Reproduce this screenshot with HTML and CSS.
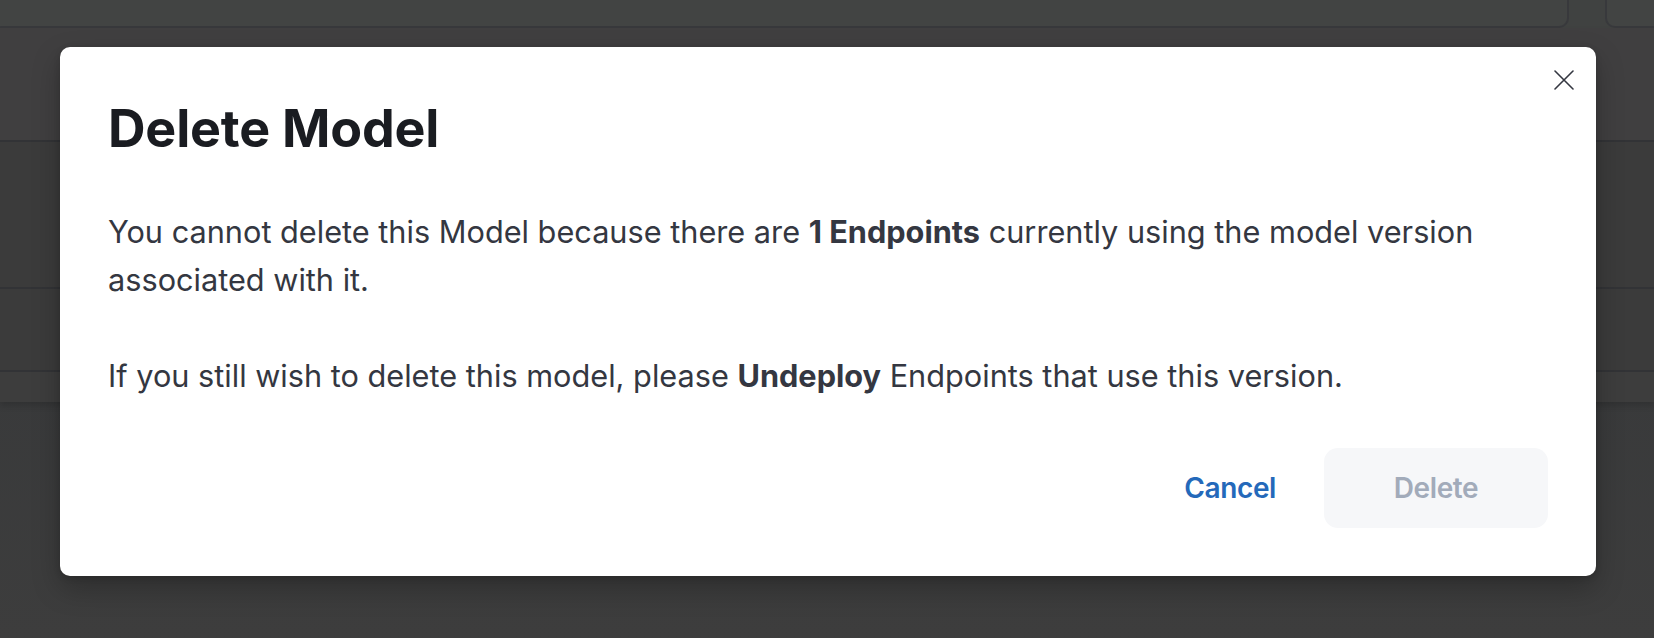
FILE: index.html
```html
<!DOCTYPE html>
<html lang="en">
<head>
<meta charset="utf-8">
<title>Delete Model</title>
<link rel="stylesheet" href="styles.css">
</head>
<body>
<div class="page">
  <div class="topbar">
    <div class="card card-a"></div>
    <div class="card card-b"></div>
  </div>
  <div class="panel">
    <div class="panel-head"></div>
    <div class="row row-tall"></div>
    <div class="row row-mid"></div>
    <div class="row row-short"></div>
  </div>
</div>

<div class="modal" role="dialog" aria-labelledby="modal-title">
  <button class="close" aria-label="Close">
    <svg width="20" height="20" viewBox="0 0 20 20" aria-hidden="true">
      <path d="M1 1 L19 19 M19 1 L1 19" stroke="#343741" stroke-width="1.6" stroke-linecap="round" fill="none"/>
    </svg>
  </button>
  <h1 id="modal-title" class="title">Delete Model</h1>
  <p class="text">You cannot delete this Model because there are <strong>1 Endpoints</strong> currently using the model version associated with it.</p>
  <p class="text">If you still wish to delete this model, please <strong>Undeploy</strong> Endpoints that use this version.</p>
  <div class="actions">
    <button class="btn btn-cancel">Cancel</button>
    <button class="btn btn-delete" disabled>Delete</button>
  </div>
</div>
</body>
</html>
```
FILE: styles.css
```css
html, body {
  margin: 0;
  padding: 0;
}

body {
  width: 1654px;
  height: 638px;
  overflow: hidden;
  position: relative;
  background: linear-gradient(180deg, #343535 0%, #393a3b 60%, #3d3d3d 100%);
  font-family: Inter, "Noto Sans", sans-serif;
}

.page {
  display: flex;
  flex-direction: column;
}

.topbar {
  display: flex;
  gap: 36px;
  margin: 0 -20px;
  height: 28px;
  background: #404241;
}

.card {
  background: #424443;
  border: 2px solid #38393c;
  border-top: none;
  border-radius: 0 0 10px 10px;
}

.card-a {
  flex: 0 0 1589px;
  box-sizing: border-box;
}

.card-b {
  flex: 1;
}

.panel {
  display: flex;
  flex-direction: column;
  background: #3d3e3e;
  box-shadow: 0 4px 6px rgba(0, 0, 0, 0.15);
}

.panel-head {
  height: 112px;
  background: #403f40;
}

.row {
  border-top: 2px solid #323336;
  background: #3b3b3b;
}

.row-tall {
  height: 145px;
}

.row-mid {
  height: 81px;
}

.row-short {
  height: 30px;
  background: #3d3d3d;
}

.modal {
  position: absolute;
  left: 60px;
  top: 47px;
  width: 1536px;
  height: 529px;
  box-sizing: border-box;
  padding: 51px 48px 48px 48px;
  background: #ffffff;
  border-radius: 10px;
  box-shadow: 0 12px 28px rgba(0, 0, 0, 0.25), 0 2px 6px rgba(0, 0, 0, 0.15);
  display: flex;
  flex-direction: column;
}

.close {
  position: absolute;
  top: 23px;
  right: 22px;
  width: 20px;
  height: 20px;
  padding: 0;
  border: none;
  background: transparent;
  display: flex;
}

.title {
  margin: 0 0 48px 0;
  font-size: 52px;
  line-height: 62px;
  font-weight: 700;
  color: #1a1c21;
  letter-spacing: -0.2px;
}

.text {
  margin: 0 0 48px 0;
  font-size: 30.7px;
  line-height: 48px;
  color: #343741;
}

.text strong {
  font-weight: 700;
}

.actions {
  display: flex;
  justify-content: flex-end;
}

.btn {
  height: 80px;
  border: none;
  font-family: Inter, "Noto Sans", sans-serif;
  font-size: 28px;
  font-weight: 600;
  letter-spacing: -0.4px;
  border-radius: 14px;
  background: transparent;
}

.btn-cancel {
  padding: 0 48px;
  color: #2469ba;
}

.btn-delete {
  width: 224px;
  padding: 0;
  background: #f6f7f9;
  color: #a2abba;
}
```
